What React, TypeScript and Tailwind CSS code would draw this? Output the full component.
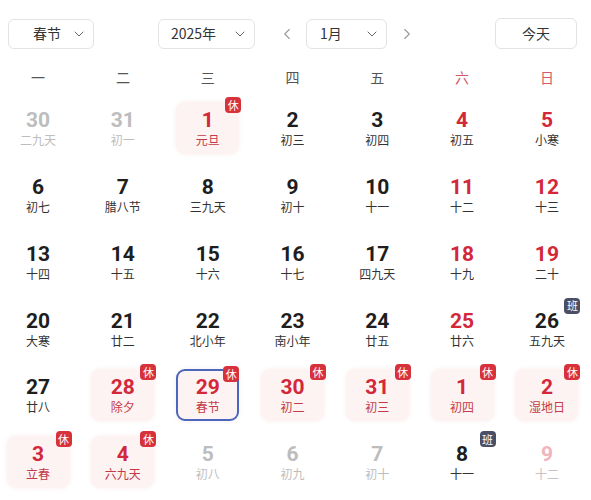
import React from "react";
import { ChevronDown, ChevronLeft, ChevronRight } from "lucide-react";

type Kind = "normal" | "red" | "prev" | "prevPink";
type Day = { n: number; l: string; k: Kind; hl?: boolean; badge?: "休" | "班"; sel?: boolean };

const rows: Day[][] = [
  [
    { n: 30, l: "二九天", k: "prev" },
    { n: 31, l: "初一", k: "prev" },
    { n: 1, l: "元旦", k: "red", hl: true, badge: "休" },
    { n: 2, l: "初三", k: "normal" },
    { n: 3, l: "初四", k: "normal" },
    { n: 4, l: "初五", k: "red" },
    { n: 5, l: "小寒", k: "red" },
  ],
  [
    { n: 6, l: "初七", k: "normal" },
    { n: 7, l: "腊八节", k: "normal" },
    { n: 8, l: "三九天", k: "normal" },
    { n: 9, l: "初十", k: "normal" },
    { n: 10, l: "十一", k: "normal" },
    { n: 11, l: "十二", k: "red" },
    { n: 12, l: "十三", k: "red" },
  ],
  [
    { n: 13, l: "十四", k: "normal" },
    { n: 14, l: "十五", k: "normal" },
    { n: 15, l: "十六", k: "normal" },
    { n: 16, l: "十七", k: "normal" },
    { n: 17, l: "四九天", k: "normal" },
    { n: 18, l: "十九", k: "red" },
    { n: 19, l: "二十", k: "red" },
  ],
  [
    { n: 20, l: "大寒", k: "normal" },
    { n: 21, l: "廿二", k: "normal" },
    { n: 22, l: "北小年", k: "normal" },
    { n: 23, l: "南小年", k: "normal" },
    { n: 24, l: "廿五", k: "normal" },
    { n: 25, l: "廿六", k: "red" },
    { n: 26, l: "五九天", k: "normal", badge: "班" },
  ],
  [
    { n: 27, l: "廿八", k: "normal" },
    { n: 28, l: "除夕", k: "red", hl: true, badge: "休" },
    { n: 29, l: "春节", k: "red", hl: true, badge: "休", sel: true },
    { n: 30, l: "初二", k: "red", hl: true, badge: "休" },
    { n: 31, l: "初三", k: "red", hl: true, badge: "休" },
    { n: 1, l: "初四", k: "red", hl: true, badge: "休" },
    { n: 2, l: "湿地日", k: "red", hl: true, badge: "休" },
  ],
  [
    { n: 3, l: "立春", k: "red", hl: true, badge: "休" },
    { n: 4, l: "六九天", k: "red", hl: true, badge: "休" },
    { n: 5, l: "初八", k: "prev" },
    { n: 6, l: "初九", k: "prev" },
    { n: 7, l: "初十", k: "prev" },
    { n: 8, l: "十一", k: "normal", badge: "班" },
    { n: 9, l: "十二", k: "prevPink" },
  ],
];

const weekdays = ["一", "二", "三", "四", "五", "六", "日"];

function Cell({ d }: { d: Day }) {
  const numColor =
    d.k === "red"
      ? "text-[#d2283a]"
      : d.k === "prev"
      ? "text-[#bdbdbd]"
      : d.k === "prevPink"
      ? "text-[#f0b4be]"
      : "text-[#1e1e1e]";
  const lunarColor = d.hl
    ? "text-[#c43a48]"
    : d.k === "prev"
    ? "text-[#bdbdbd]"
    : d.k === "prevPink"
    ? "text-[#c8c0c2]"
    : "text-[#333333]";
  return (
    <div className="flex h-[66.75px] items-center justify-center">
      <div
        className={
          "relative flex h-[52px] w-[63px] flex-col items-center justify-center rounded-[9px] " +
          (d.hl ? "bg-[#fdf3f3] shadow-[0_0_4px_rgba(240,200,200,0.35)] " : "") +
          (d.sel ? "border-[2px] border-[#4a66bd]" : "")
        }
      >
        <div
          className={"text-[21px] font-bold leading-[22px] " + numColor}
          style={{ fontFamily: "Roboto, 'Noto Sans', sans-serif" }}
        >
          {d.n}
        </div>
        <div className={"mt-[1px] text-[12px] leading-[15px] " + lunarColor}>{d.l}</div>
        {d.badge && (
          <div
            className={
              "absolute right-[-2px] top-[-5px] flex h-[16px] w-[16px] items-center justify-center rounded-[4px] text-[11px] leading-none text-white " +
              (d.badge === "休" ? "bg-[#d7313c]" : "bg-[#4b4f66]")
            }
          >
            {d.badge}
          </div>
        )}
      </div>
    </div>
  );
}

export default function App() {
  return (
    <div
      className="h-[500px] w-[591px] overflow-hidden bg-white"
      style={{ fontFamily: "'Noto Sans CJK SC', 'Noto Sans', sans-serif" }}
    >
      <div className="flex items-center pt-[18px]">
        <div className="ml-[8px] flex h-[30px] w-[86px] items-center justify-between rounded-[6px] border border-[#e3e3e3] pl-[24px] pr-[6px] text-[14px] text-[#333]">
          <span>春节</span>
          <ChevronDown size={16} strokeWidth={1.5} color="#666" />
        </div>
        <div className="ml-[64px] flex h-[30px] w-[97px] items-center justify-between rounded-[6px] border border-[#e3e3e3] pl-[12px] pr-[6px] text-[14px] text-[#333]">
          <span>2025年</span>
          <ChevronDown size={16} strokeWidth={1.5} color="#666" />
        </div>
        <div className="ml-[22px] flex w-[20px] justify-center">
          <ChevronLeft size={18} strokeWidth={1.5} color="#9a9a9a" />
        </div>
        <div className="ml-[9px] flex h-[30px] w-[81px] items-center justify-between rounded-[6px] border border-[#e3e3e3] pl-[13px] pr-[6px] text-[14px] text-[#333]">
          <span>1月</span>
          <ChevronDown size={16} strokeWidth={1.5} color="#666" />
        </div>
        <div className="ml-[10px] flex w-[20px] justify-center">
          <ChevronRight size={18} strokeWidth={1.5} color="#9a9a9a" />
        </div>
        <div className="ml-auto mr-[14px] flex h-[31px] w-[82px] items-center justify-center rounded-[6px] border border-[#e3e3e3] text-[14px] text-[#333]">
          今天
        </div>
      </div>

      <div className="mb-[4px] mt-[14px] grid h-[28px] grid-cols-7 gap-x-[8.67px] pr-[6px]">
        {weekdays.map((w, i) => (
          <div
            key={w}
            className={
              "flex items-center justify-center text-[14px] " +
              (i >= 5 ? "text-[#d45a6a]" : "text-[#555555]")
            }
          >
            {w}
          </div>
        ))}
      </div>

      <div className="grid grid-cols-7 gap-x-[8.67px] pr-[6px]">
        {rows.flat().map((d, i) => (
          <Cell key={i} d={d} />
        ))}
      </div>
    </div>
  );
}
